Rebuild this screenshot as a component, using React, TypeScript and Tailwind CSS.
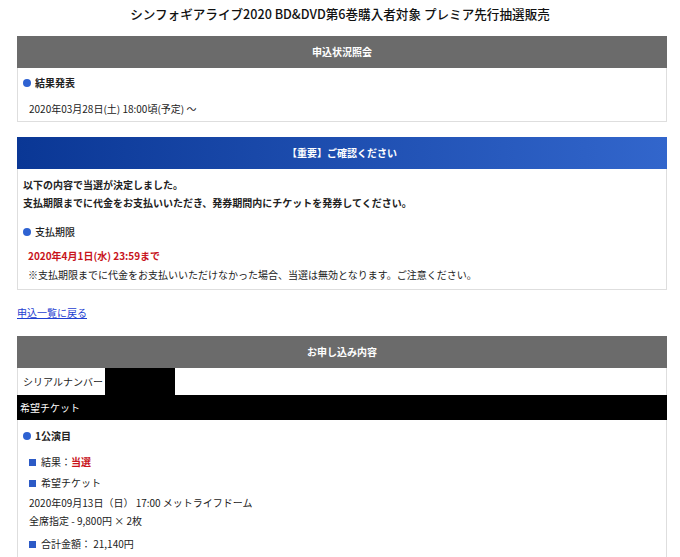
export default function App() {
  const dot = <span className="inline-block w-[8px] h-[8px] rounded-full bg-[#2e62d2] mr-[4px]" />;
  const sq = <span className="inline-block w-[7px] h-[7px] bg-[#2c5ac6] mr-[5px]" />;

  return (
    <div className="min-h-screen w-[680px] bg-white text-[#222] font-['Noto_Sans_CJK_JP','Noto_Sans',sans-serif] text-[10px] leading-[18px]">
      <h1 className="h-[36px] pt-[5px] text-center text-[12.6px] leading-[18px] font-medium text-[#111]">
        シンフォギアライブ2020 BD&amp;DVD第6巻購入者対象 プレミア先行抽選販売
      </h1>

      <div className="mx-[17px] w-[650px]">
        {/* status */}
        <div className="h-[32px] flex items-center justify-center bg-[#6b6b6b] text-white font-bold">
          申込状況照会
        </div>
        <div className="h-[54px] border border-t-0 border-[#dedede] pt-[6px] px-[5px]">
          <div className="flex items-center font-bold">{dot}結果発表</div>
          <div className="mt-[8px] pl-[6px]">2020年03月28日(土) 18:00頃(予定) ～</div>
        </div>

        {/* notice */}
        <div className="mt-[15px] h-[32px] flex items-center justify-center bg-gradient-to-r from-[#0a3795] to-[#3266cc] text-white font-bold">
          【重要】ご確認ください
        </div>
        <div className="h-[121px] border border-t-0 border-[#dedede] pt-[7px] px-[5px]">
          <div className="font-bold">以下の内容で当選が決定しました。</div>
          <div className="font-bold">支払期限までに代金をお支払いいただき、発券期間内にチケットを発券してください。</div>
          <div className="mt-[11px] flex items-center font-medium">{dot}支払期限</div>
          <div className="mt-[6px] pl-[5px] font-bold text-[#c8141c]">2020年4月1日(水) 23:59まで</div>
          <div className="mt-[1px] pl-[5px]">※支払期限までに代金をお支払いいただけなかった場合、当選は無効となります。ご注意ください。</div>
        </div>

        <div className="mt-[14px] h-[18px]">
          <a href="#" className="text-[#1f3fd1] underline">申込一覧に戻る</a>
        </div>

        {/* application */}
        <div className="mt-[14px] h-[32px] flex items-center justify-center bg-[#6b6b6b] text-white font-bold">
          お申し込み内容
        </div>
        <div className="h-[27px] flex items-center border-x border-[#dedede] px-[5px]">
          <span>シリアルナンバー：</span>
          <span className="ml-[-8px] w-[70px] h-[27px] bg-black" />
        </div>
        <div className="h-[25px] flex items-center bg-black text-white px-[3px]">希望チケット</div>
        <div className="h-[140px] border-x border-[#dedede] pt-[7px] px-[5px]">
          <div className="flex items-center font-bold">{dot}1公演目</div>
          <div className="mt-[8px] pl-[6px] flex items-center">
            {sq}結果：<span className="font-bold text-[#c8141c]">当選</span>
          </div>
          <div className="mt-[3px] pl-[6px] flex items-center">{sq}希望チケット</div>
          <div className="mt-[2px] pl-[6px]">2020年09月13日（日） 17:00 メットライフドーム</div>
          <div className="pl-[6px]">全席指定 - 9,800円 × 2枚</div>
          <div className="mt-[5px] pl-[6px] flex items-center">{sq}合計金額： 21,140円</div>
        </div>
      </div>
    </div>
  );
}
